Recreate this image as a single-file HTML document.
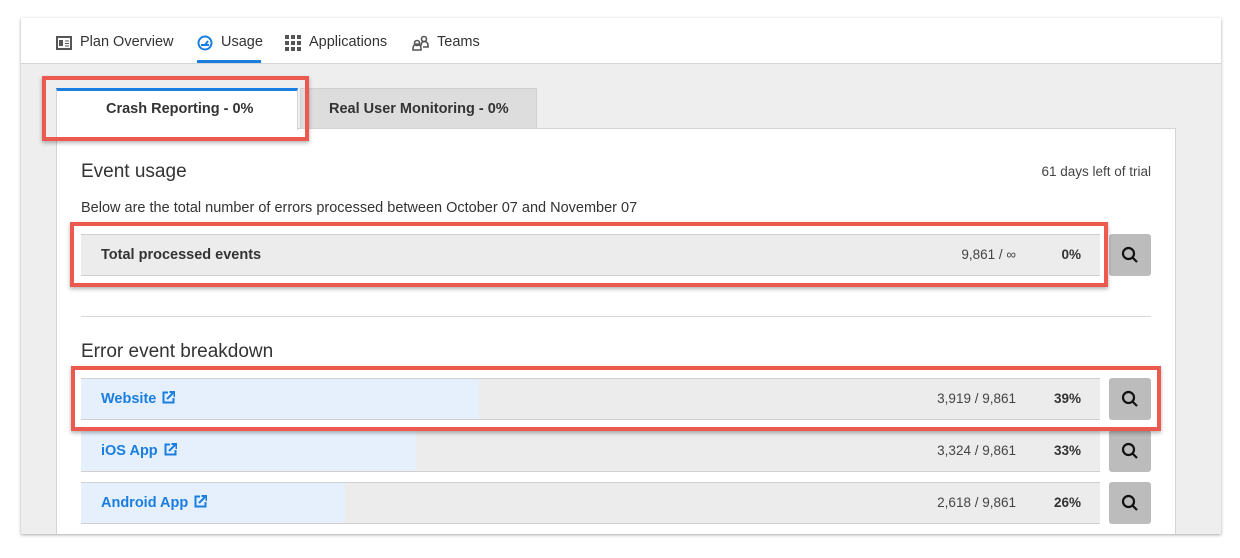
<!DOCTYPE html>
<html><head><meta charset="utf-8"><style>
*{box-sizing:border-box;margin:0;padding:0}
body{width:1240px;height:558px;background:#fff;font-family:"Liberation Sans",sans-serif;position:relative;overflow:hidden;color:#333}
.a{position:absolute}
.card{left:21px;top:18px;width:1200px;height:516px;background:#eee;box-shadow:0 1px 3px rgba(0,0,0,.35);}
.nav{left:21px;top:18px;width:1200px;height:46px;background:#fff;border-bottom:1px solid #d6d6d6}
.nt{top:34px;font-size:14.5px;color:#333}
.panel{left:56px;top:128px;width:1120px;height:406px;background:#fff;border:1px solid #d4d4d4;border-bottom:none}
.row{left:81px;width:1019px;height:42px;background:#ececec;border-top:1px solid #d0d0d0;border-bottom:1px solid #d0d0d0}
.fill{position:absolute;left:0;top:0;bottom:0;background:#e6f0fd}
.lbl{position:absolute;left:20px;top:12px;font-size:14.5px;color:#1a7ee0;font-weight:bold;white-space:nowrap}
.lbl svg{vertical-align:-1px;margin-left:6px}
.num{position:absolute;right:84px;top:12px;font-size:13.5px;color:#444}
.pct{position:absolute;right:19px;top:12px;font-size:13.5px;font-weight:bold;color:#333}
.btn{left:1109px;width:42px;height:42px;background:#bcbcbc;border-radius:3px}
.btn svg{position:absolute;left:12px;top:12px}
.red{border:4px solid #ec5a4f;box-shadow:0 2px 4px rgba(0,0,0,.3)}
</style></head><body>
<div class="a card"></div>
<div class="a nav"></div>
<svg class="a" style="left:56px;top:36px" width="16" height="14"><rect x="1" y="1" width="14" height="12" fill="none" stroke="#555" stroke-width="2"/><rect x="3" y="4" width="4" height="6" fill="#555"/><line x1="9" y1="5" x2="13" y2="5" stroke="#555"/><line x1="9" y1="7.5" x2="13" y2="7.5" stroke="#555"/><line x1="9" y1="10" x2="13" y2="10" stroke="#555"/></svg>
<div class="a nt" style="left:80px">Plan Overview</div>
<svg class="a" style="left:197px;top:35px" width="16" height="16"><circle cx="8" cy="8" r="6.5" fill="none" stroke="#1a7ee0" stroke-width="2"/><path d="M4 10h8M8 10L11 6" stroke="#1a7ee0" stroke-width="2"/></svg>
<div class="a nt" style="left:221px">Usage</div>
<div class="a" style="left:197px;top:60px;width:64px;height:3px;background:#1a7ee0"></div>
<svg class="a" style="left:285px;top:35px" width="16" height="16" fill="#555"><rect x="0" y="0" width="4" height="4"/><rect x="6" y="0" width="4" height="4"/><rect x="12" y="0" width="4" height="4"/><rect x="0" y="6" width="4" height="4"/><rect x="6" y="6" width="4" height="4"/><rect x="12" y="6" width="4" height="4"/><rect x="0" y="12" width="4" height="4"/><rect x="6" y="12" width="4" height="4"/><rect x="12" y="12" width="4" height="4"/></svg>
<div class="a nt" style="left:309px">Applications</div>
<svg class="a" style="left:412px;top:35px" width="17" height="16" fill="none" stroke="#555" stroke-width="1.6"><circle cx="5" cy="8" r="2.5"/><path d="M1 15v-2a3 3 0 0 1 8 0v2z"/><circle cx="12" cy="4" r="2.5"/><path d="M9 11v-1a3 3 0 0 1 7 0v2h-5"/></svg>
<div class="a nt" style="left:437px">Teams</div>

<div class="a" style="left:300px;top:88px;width:237px;height:41px;background:#ddd;border:1px solid #d0d0d0;border-bottom:none"></div>
<div class="a" style="left:329px;top:101px;font-size:14.5px;font-weight:bold;color:#333">Real User Monitoring - 0%</div>
<div class="a panel"></div>
<div class="a" style="left:56px;top:88px;width:242px;height:42px;background:#fff;border-top:3px solid #1a7ee0;border-left:1px solid #d4d4d4;border-right:1px solid #d4d4d4"></div>
<div class="a" style="left:106px;top:101px;font-size:14.5px;font-weight:bold;color:#333">Crash Reporting - 0%</div>

<div class="a" style="left:81px;top:161px;font-size:19px;color:#333">Event usage</div>
<div class="a" style="right:89px;top:164px;font-size:13.5px;color:#444">61 days left of trial</div>
<div class="a" style="left:81px;top:200px;font-size:14.5px;color:#333">Below are the total number of errors processed between October 07 and November 07</div>
<div class="a row" style="top:234px"><div style="position:absolute;left:20px;top:12px;font-size:14.5px;font-weight:bold;color:#333">Total processed events</div><div class="num" style="right:84px">9,861 / ∞</div><div class="pct">0%</div></div>
<div class="a btn" style="top:234px"><svg width="18" height="18" fill="none" stroke="#111" stroke-width="2.2"><circle cx="7.5" cy="7.5" r="5.5"/><path d="M11.5 11.5L16 16"/></svg></div>
<div class="a" style="left:81px;top:316px;width:1070px;height:1px;background:#d8d8d8"></div>
<div class="a" style="left:81px;top:341px;font-size:19px;color:#333">Error event breakdown</div>

<div class="a row" style="top:378px"><div class="fill" style="width:398px"></div><div class="lbl">Website<svg width="13" height="13" fill="none" stroke="#1a7ee0" stroke-width="2"><path d="M6 1.5H1.5v10h10V7"/><path d="M5 8L11.5 1.5M7.5 1h5v5" /></svg></div><div class="num">3,919 / 9,861</div><div class="pct">39%</div></div>
<div class="a btn" style="top:378px"><svg width="18" height="18" fill="none" stroke="#111" stroke-width="2.2"><circle cx="7.5" cy="7.5" r="5.5"/><path d="M11.5 11.5L16 16"/></svg></div>
<div class="a row" style="top:430px"><div class="fill" style="width:335px"></div><div class="lbl">iOS App<svg width="13" height="13" fill="none" stroke="#1a7ee0" stroke-width="2"><path d="M6 1.5H1.5v10h10V7"/><path d="M5 8L11.5 1.5M7.5 1h5v5" /></svg></div><div class="num">3,324 / 9,861</div><div class="pct">33%</div></div>
<div class="a btn" style="top:430px"><svg width="18" height="18" fill="none" stroke="#111" stroke-width="2.2"><circle cx="7.5" cy="7.5" r="5.5"/><path d="M11.5 11.5L16 16"/></svg></div>
<div class="a row" style="top:482px"><div class="fill" style="width:264px"></div><div class="lbl">Android App<svg width="13" height="13" fill="none" stroke="#1a7ee0" stroke-width="2"><path d="M6 1.5H1.5v10h10V7"/><path d="M5 8L11.5 1.5M7.5 1h5v5" /></svg></div><div class="num">2,618 / 9,861</div><div class="pct">26%</div></div>
<div class="a btn" style="top:482px"><svg width="18" height="18" fill="none" stroke="#111" stroke-width="2.2"><circle cx="7.5" cy="7.5" r="5.5"/><path d="M11.5 11.5L16 16"/></svg></div>

<div class="a red" style="left:42px;top:76px;width:267px;height:65px"></div>
<div class="a red" style="left:70px;top:222px;width:1038px;height:65px"></div>
<div class="a red" style="left:71px;top:366px;width:1090px;height:65px"></div>
</body></html>
